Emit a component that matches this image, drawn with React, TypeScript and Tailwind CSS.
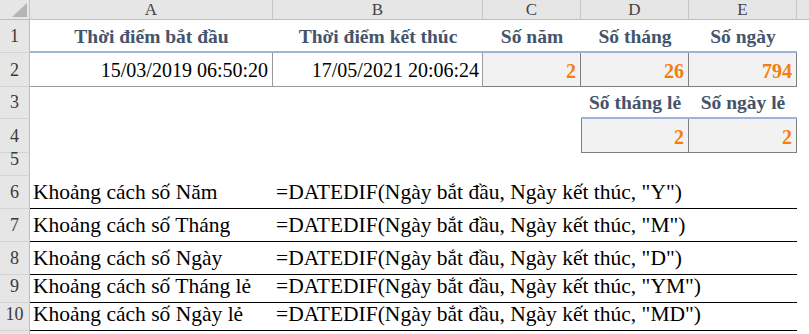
import type { ReactNode } from 'react';

const serif = "[font-family:'Liberation_Serif','Times_New_Roman',serif]";

// row number cell on the left
const Num = ({ children, h }: { children?: ReactNode; h: string }) => (
  <div
    className={`${h} w-[30px] shrink-0 flex items-end justify-center pb-[2px] bg-[#e6e6e6] border-r border-r-[#bdbdbd] border-b border-b-[#d3d3d3] text-[18px] text-[#3a3a3a]`}
  >
    {children}
  </div>
);

const ColHead = ({ label, w }: { label?: string; w: string }) => (
  <div
    className={`${w} h-full flex items-center justify-center bg-[#e6e6e6] border-r border-r-[#c6c6c6] border-b border-b-[#bdbdbd] text-[17px] text-[#444]`}
  >
    {label}
  </div>
);

const Heading = ({ children, w }: { children?: ReactNode; w: string }) => (
  <div
    className={`${w} h-full flex items-end justify-center border-b-2 border-b-[#9fb2dc] text-[19.5px] font-bold text-[#44546a] whitespace-nowrap`}
  >
    {children}
  </div>
);

const Calc = ({ children, w, left }: { children?: ReactNode; w: string; left?: boolean }) => (
  <div
    className={`${w} h-full flex items-end justify-end pr-[4px] bg-[#f2f2f2] border-r border-b border-[#7f7f7f] ${left ? 'border-l' : ''} text-[20px] font-bold text-[#f57f0c]`}
  >
    {children}
  </div>
);

const formulas = [
  { label: 'Khoảng cách số Năm', f: 'Y', h: 'h-[33px]' },
  { label: 'Khoảng cách số Tháng', f: 'M', h: 'h-[33px]' },
  { label: 'Khoảng cách số Ngày', f: 'D', h: 'h-[33px]' },
  { label: 'Khoảng cách số Tháng lẻ', f: 'YM', h: 'h-[28px]' },
  { label: 'Khoảng cách số Ngày lẻ', f: 'MD', h: 'h-[28px]' },
];

export default function App() {
  return (
    <div className={`w-[809px] h-[334px] overflow-hidden bg-white text-black ${serif}`}>
      {/* column letters */}
      <div className="flex h-[20px]">
        <div className="w-[30px] h-full relative bg-[#e6e6e6] border-r border-r-[#c6c6c6] border-b border-b-[#bdbdbd]">
          <svg className="absolute left-0 top-0" width="30" height="20" viewBox="0 0 30 20">
            <polygon points="12,17 27,17 27,3" fill="#b5b5b5" />
          </svg>
        </div>
        <ColHead label="A" w="w-[243px]" />
        <ColHead label="B" w="w-[210px]" />
        <ColHead label="C" w="w-[98px]" />
        <ColHead label="D" w="w-[108px]" />
        <ColHead label="E" w="w-[108px]" />
        <div className="flex-1 h-full bg-[#e6e6e6] border-b border-b-[#bdbdbd]" />
      </div>

      {/* row 1 */}
      <div className="flex h-[33px]">
        <Num h="h-full">1</Num>
        <Heading w="w-[243px]">Thời điểm bắt đầu</Heading>
        <Heading w="w-[210px]">Thời điểm kết thúc</Heading>
        <Heading w="w-[98px]">Số năm</Heading>
        <Heading w="w-[108px]">Số tháng</Heading>
        <Heading w="w-[108px]">Số ngày</Heading>
      </div>

      {/* row 2 */}
      <div className="flex h-[34px]">
        <Num h="h-full">2</Num>
        <div className="w-[243px] h-full flex items-end justify-end pr-[4px] pb-[1px] border-r border-b border-[#9a9a9a] text-[20px]">
          15/03/2019 06:50:20
        </div>
        <div className="w-[210px] h-full flex items-end justify-end pr-[3px] pb-[1px] border-r border-b border-[#9a9a9a] text-[20px]">
          17/05/2021 20:06:24
        </div>
        <Calc w="w-[98px]">2</Calc>
        <Calc w="w-[108px]">26</Calc>
        <Calc w="w-[108px]">794</Calc>
      </div>

      {/* row 3 */}
      <div className="flex h-[32px]">
        <Num h="h-full">3</Num>
        <div className="w-[551px]" />
        <Heading w="w-[108px]">Số tháng lẻ</Heading>
        <Heading w="w-[108px]">Số ngày lẻ</Heading>
      </div>

      {/* row 4 */}
      <div className="flex h-[34px]">
        <Num h="h-full">4</Num>
        <div className="w-[551px]" />
        <Calc w="w-[108px]" left>2</Calc>
        <Calc w="w-[108px]">2</Calc>
      </div>

      {/* row 5 */}
      <div className="flex h-[23px]">
        <Num h="h-full">5</Num>
      </div>

      {/* formula rows */}
      {formulas.map((r, i) => (
        <div key={r.f} className={`flex ${r.h}`}>
          <Num h="h-full">{i + 6}</Num>
          <div className="w-[243px] h-full flex items-end pl-[3px] border-b border-black text-[21.5px] whitespace-nowrap">
            {r.label}
          </div>
          <div className="w-[524px] h-full flex items-end pl-[3px] border-b border-black text-[21.5px] whitespace-nowrap">
            =DATEDIF(Ngày bắt đầu, Ngày kết thúc, "{r.f}")
          </div>
        </div>
      ))}

      <div className="flex h-[10px]">
        <Num h="h-full" />
      </div>
    </div>
  );
}
